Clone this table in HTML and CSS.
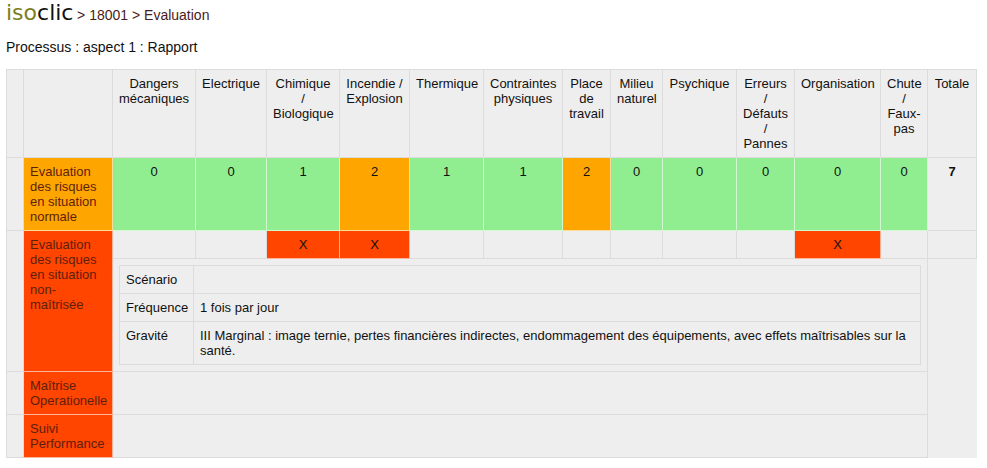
FILE: index.html
```html
<!DOCTYPE html>
<html lang="fr">
<head>
<meta charset="utf-8">
<title>isoclic &gt; 18001 &gt; Evaluation</title>
<link rel="stylesheet" href="styles.css">
</head>
<body>
<div class="top"><span class="logo"><span class="iso">iso</span><span class="clic">clic</span></span> <span class="crumb">&gt; 18001 &gt; Evaluation</span></div>
<div class="subtitle">Processus : aspect 1 : Rapport</div>
<table class="grid">
  <colgroup>
    <col class="w-pad"><col class="w-label"><col class="w-dang"><col class="w-elec"><col class="w-chim"><col class="w-inc"><col class="w-therm"><col class="w-contr"><col class="w-place"><col class="w-milieu"><col class="w-psy"><col class="w-err"><col class="w-orga"><col class="w-chute"><col class="w-total">
  </colgroup>
  <tr>
    <td></td>
    <td></td>
    <th>Dangers<br>mécaniques</th>
    <th>Electrique</th>
    <th>Chimique<br>/<br>Biologique</th>
    <th>Incendie /<br>Explosion</th>
    <th>Thermique</th>
    <th>Contraintes<br>physiques</th>
    <th>Place<br>de<br>travail</th>
    <th>Milieu<br>naturel</th>
    <th>Psychique</th>
    <th>Erreurs<br>/<br>Défauts<br>/<br>Pannes</th>
    <th>Organisation</th>
    <th>Chute<br>/<br>Faux-<br>pas</th>
    <th>Totale</th>
  </tr>
  <tr>
    <td></td>
    <td class="label warn">Evaluation<br>des risques<br>en situation<br>normale</td>
    <td class="ok">0</td>
    <td class="ok">0</td>
    <td class="ok">1</td>
    <td class="warn">2</td>
    <td class="ok">1</td>
    <td class="ok">1</td>
    <td class="warn">2</td>
    <td class="ok">0</td>
    <td class="ok">0</td>
    <td class="ok">0</td>
    <td class="ok">0</td>
    <td class="ok">0</td>
    <td class="sum">7</td>
  </tr>
  <tr>
    <td rowspan="2"></td>
    <td rowspan="2" class="label crit">Evaluation<br>des risques<br>en situation<br>non-<br>maîtrisée</td>
    <td></td>
    <td></td>
    <td class="crit">X</td>
    <td class="crit">X</td>
    <td></td>
    <td></td>
    <td></td>
    <td></td>
    <td></td>
    <td></td>
    <td class="crit">X</td>
    <td></td>
    <td></td>
  </tr>
  <tr>
    <td colspan="12" class="holder">
      <table class="nest">
        <colgroup><col class="w-key"><col></colgroup>
        <tr><td>Scénario</td><td></td></tr>
        <tr><td>Fréquence</td><td>1 fois par jour</td></tr>
        <tr><td>Gravité</td><td>III Marginal : image ternie, pertes financières indirectes, endommagement des équipements, avec effets maîtrisables sur la santé.</td></tr>
      </table>
    </td>
    <td rowspan="3" class="rest"></td>
  </tr>
  <tr>
    <td></td>
    <td class="label crit">Maîtrise<br>Operationelle</td>
    <td colspan="12"></td>
  </tr>
  <tr>
    <td></td>
    <td class="label crit">Suivi<br>Performance</td>
    <td colspan="12"></td>
  </tr>
</table>
</body>
</html>
```
FILE: styles.css
```css
body {
  margin: 0;
  padding: 0 6px;
  font-family: "Liberation Sans", Arial, sans-serif;
  font-size: 13px;
  line-height: 15px;
  color: #111;
  background: #fff;
}

.top {
  height: 26px;
  line-height: 26px;
  white-space: nowrap;
}

.logo {
  font-family: "DejaVu Sans", sans-serif;
  font-size: 22px;
}

.logo .iso { color: #7d7d1c; }
.logo .clic { color: #111; }

.crumb {
  color: #4a1c1c;
  font-size: 14px;
}

.subtitle {
  margin: 13px 0 14px;
  font-size: 14px;
  line-height: 16px;
}

.grid {
  border-collapse: separate;
  border-spacing: 0;
  table-layout: fixed;
  width: 971px;
  border-left: 1px solid #dcdcdc;
  border-top: 1px solid #dcdcdc;
  background: #eee;
}

.w-pad { width: 17px; }
.w-label { width: 89px; }
.w-dang { width: 83px; }
.w-elec { width: 71px; }
.w-chim { width: 73px; }
.w-inc { width: 70px; }
.w-therm { width: 74px; }
.w-contr { width: 79px; }
.w-place { width: 48px; }
.w-milieu { width: 52px; }
.w-psy { width: 74px; }
.w-err { width: 58px; }
.w-orga { width: 86px; }
.w-chute { width: 47px; }
.w-total { width: 49px; }

.grid td,
.grid th {
  border-right: 1px solid #dcdcdc;
  border-bottom: 1px solid #dcdcdc;
  padding: 6px;
  vertical-align: top;
  text-align: center;
  font-weight: normal;
  white-space: nowrap;
  line-height: 15px;
  color: #111;
}

.grid .label {
  text-align: left;
  color: #5e1f0c;
}

.grid .ok { background: #90ee90; }
.grid .warn { background: #ffa500; }
.grid .crit { background: #ff4500; }

.grid .ok,
.grid .warn,
.grid .crit {
  border-right-color: rgba(255, 255, 255, 0.6);
  border-bottom-color: rgba(255, 255, 255, 0.6);
}

.grid .sum { font-weight: bold; }

.grid .holder {
  text-align: left;
  padding: 6px;
}

.grid .rest {
  border-right-color: transparent;
  border-bottom-color: transparent;
}

.nest {
  width: 100%;
  border-collapse: separate;
  border-spacing: 0;
  table-layout: fixed;
  border-left: 1px solid #dcdcdc;
  border-top: 1px solid #dcdcdc;
}

.w-key { width: 74px; }

.grid .nest td {
  text-align: left;
  white-space: normal;
  padding: 6px;
}
```
